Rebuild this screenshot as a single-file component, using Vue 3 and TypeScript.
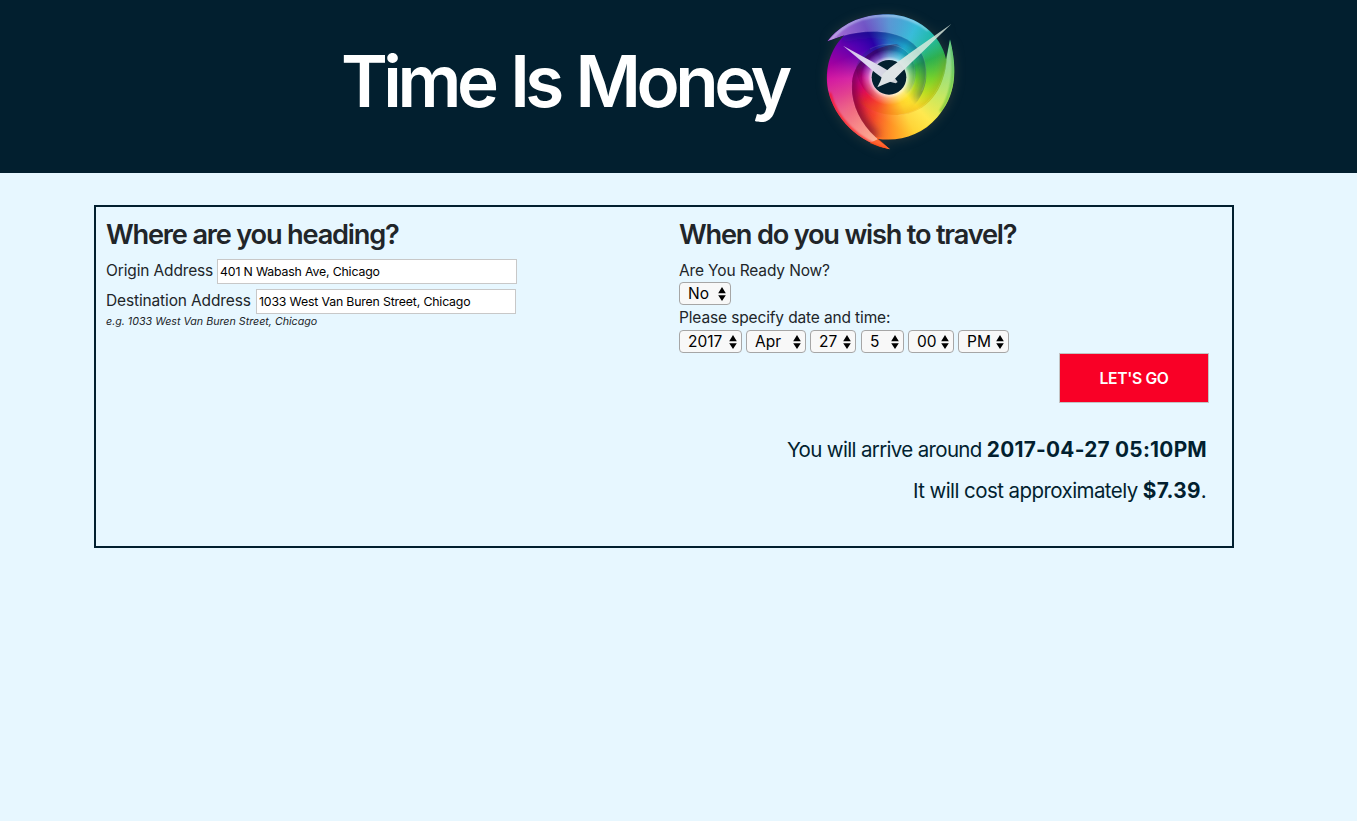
<script setup lang="ts">
import { ref } from 'vue'

interface Picker {
  name: string
  options: string[]
}

const origin = ref('401 N Wabash Ave, Chicago')
const destination = ref('1033 West Van Buren Street, Chicago')

const pickers: Picker[] = [
  { name: 'year', options: ['2017'] },
  { name: 'month', options: ['Apr'] },
  { name: 'day', options: ['27'] },
  { name: 'hour', options: ['5'] },
  { name: 'minute', options: ['00'] },
  { name: 'period', options: ['PM'] },
]
</script>

<template>
  <header class="banner">
    <h1 class="title">Time Is Money</h1>
    <div class="logo">
      <div class="wheel"></div>
      <svg class="blades" viewBox="0 0 480 516" aria-hidden="true">
        <defs>
          <clipPath id="outline">
            <path d="M52 124C92 74 150 43 235 43C322 45 394 105 408 178L420 118C444 215 437 288 382 352C335 407 268 426 201 416L240 448C145 427 74 358 54 270C43 206 61 147 103 106Z" />
          </clipPath>
          <clipPath id="underTop">
            <path d="M97 108C198 79 307 96 340 171C357 215 352 270 315 313L240 400L60 300Z" />
          </clipPath>
          <clipPath id="underRight">
            <path d="M411 168C405 270 352 340 265 345C218 346 172 330 143 302L140 150L300 60Z" />
          </clipPath>
          <clipPath id="underLeft">
            <path d="M197 412C148 367 120 305 126 247C133 177 195 138 261 132L380 200L340 420Z" />
          </clipPath>
          <clipPath id="underInner">
            <path d="M138 200C160 135 230 118 280 148C326 178 325 240 300 272C265 310 225 310 190 292C160 275 140 240 138 200Z" />
          </clipPath>
          <linearGradient id="topGloss" gradientUnits="userSpaceOnUse" x1="80" y1="100" x2="350" y2="150">
            <stop offset="0" stop-color="#fff" stop-opacity=".42" />
            <stop offset=".45" stop-color="#fff" stop-opacity=".28" />
            <stop offset="1" stop-color="#fff" stop-opacity=".02" />
          </linearGradient>
          <linearGradient id="rightGloss" gradientUnits="userSpaceOnUse" x1="420" y1="130" x2="270" y2="390">
            <stop offset="0" stop-color="#fff" stop-opacity=".5" />
            <stop offset=".5" stop-color="#fff" stop-opacity=".3" />
            <stop offset="1" stop-color="#fff" stop-opacity="0" />
          </linearGradient>
          <linearGradient id="leftGloss" gradientUnits="userSpaceOnUse" x1="190" y1="420" x2="90" y2="180">
            <stop offset="0" stop-color="#fff" stop-opacity=".5" />
            <stop offset=".45" stop-color="#fff" stop-opacity=".34" />
            <stop offset="1" stop-color="#fff" stop-opacity="0" />
          </linearGradient>
          <radialGradient id="hub">
            <stop offset=".64" stop-color="#fff" stop-opacity=".75" />
            <stop offset=".76" stop-color="#fff" stop-opacity=".35" />
            <stop offset="1" stop-color="#fff" stop-opacity="0" />
          </radialGradient>
          <linearGradient id="longHand" x1="1" y1="0" x2="0" y2="1">
            <stop offset="0" stop-color="#ddeadf" stop-opacity=".8" />
            <stop offset=".45" stop-color="#d8eee0" stop-opacity=".85" />
            <stop offset=".72" stop-color="#e0e5e6" />
            <stop offset="1" stop-color="#dde2e4" />
          </linearGradient>
          <linearGradient id="shortHand">
            <stop offset="0" stop-color="#d2b8e8" />
            <stop offset=".5" stop-color="#e0dcf0" />
            <stop offset="1" stop-color="#cbd0d3" />
          </linearGradient>
          <filter id="soft" x="-30%" y="-30%" width="160%" height="160%">
            <feGaussianBlur stdDeviation="12" />
          </filter>
          <filter id="fine" x="-30%" y="-30%" width="160%" height="160%">
            <feGaussianBlur stdDeviation="3" />
          </filter>
        </defs>
        <g clip-path="url(#outline)">
          <path d="M52 124C92 74 150 43 235 43C350 45 420 150 400 230C382 290 350 310 315 313C352 270 357 220 340 171C307 96 198 79 97 108Z" fill="url(#topGloss)" />
          <path d="M420 118C446 215 437 288 382 352C320 417 240 425 200 380C175 360 153 330 143 302C172 330 218 346 265 345C352 340 405 270 411 168Z" fill="url(#rightGloss)" />
          <path d="M240 448C145 427 74 358 54 270C43 205 68 159 117 147C166 133 220 126 261 132C195 138 133 177 126 247C120 305 148 367 197 412Z" fill="url(#leftGloss)" />
          <g clip-path="url(#underTop)">
            <path d="M97 108C198 79 307 96 340 171C357 215 352 260 325 300" fill="none" stroke="#00206c" stroke-opacity=".45" stroke-width="26" filter="url(#soft)" />
          </g>
          <g clip-path="url(#underRight)">
            <path d="M411 168C405 270 352 340 265 345C218 346 172 330 143 302" fill="none" stroke="#d86a00" stroke-opacity=".3" stroke-width="20" filter="url(#soft)" />
          </g>
          <g clip-path="url(#underLeft)">
            <path d="M197 412C148 367 120 305 126 247C133 177 195 138 261 132" fill="none" stroke="#48002f" stroke-opacity=".65" stroke-width="28" filter="url(#soft)" />
          </g>
          <g clip-path="url(#underInner)">
            <path d="M138 200C160 135 230 118 280 148C326 178 325 240 300 272" fill="none" stroke="#003070" stroke-opacity=".38" stroke-width="20" filter="url(#soft)" />
            <path d="M138 200C140 240 160 275 190 292" fill="none" stroke="#600020" stroke-opacity=".35" stroke-width="20" filter="url(#soft)" />
          </g>
          <g fill="none" stroke="#fff" stroke-opacity=".16" stroke-width="2">
            <path d="M97 108C198 79 307 96 340 171C352 205 350 240 335 273" />
            <path d="M180 147C230 121 280 135 302 169C320 200 319 238 300 272" />
            <path d="M126 247C120 305 148 367 197 412" />
            <path d="M411 168C400 270 348 337 265 345" />
          </g>
          <path d="M61 122C104 69 157 46 235 46C284 48 323 65 355 91" fill="none" stroke="#d8edff" stroke-opacity=".65" stroke-width="5" filter="url(#fine)" />
          <path d="M230 446C145 424 78 354 59 278" fill="none" stroke="#ff0008" stroke-opacity=".8" stroke-width="6" filter="url(#fine)" />
          <path d="M420 123C438 207 430 278 391 335" fill="none" stroke="#1ca817" stroke-opacity=".65" stroke-width="5" filter="url(#fine)" />
        </g>
        <path d="M210 415L199 411L240 448Q207 442 179 429Z" fill="#ff4d13" fill-opacity=".75" />
        <circle cx="237" cy="232" r="83" fill="url(#hub)" />
        <circle cx="237" cy="232" r="52" fill="#03202f" />
        <path d="M99 137L211 198L240 215L263 246L257 250L245 247L222 238L197 219Z" fill="url(#shortHand)" />
        <path d="M423 73L304 166L255 207L208 247L216 256L241 228Z" fill="#000" fill-opacity=".15" filter="url(#fine)" />
        <path d="M424 72L274 217L249 242L219 254L202 262L211 244L218 223L240 203L304 156Z" fill="url(#longHand)" />
      </svg>
    </div>
  </header>

  <main class="panel">
    <section class="where">
      <h2 class="heading">Where are you heading?</h2>
      <div class="field">
        <label class="origin-label" for="origin">Origin Address</label>
        <input id="origin" v-model="origin" class="address" type="text" />
      </div>
      <div class="field destination-field">
        <label class="destination-label" for="destination">Destination Address</label>
        <input id="destination" v-model="destination" class="address destination" type="text" />
      </div>
      <p class="hint">e.g. 1033 West Van Buren Street, Chicago</p>
    </section>

    <section class="when">
      <h2 class="heading">When do you wish to travel?</h2>
      <p class="label">Are You Ready Now?</p>
      <div class="picker ready">
        <select aria-label="ready"><option>No</option></select>
        <svg class="arrows" viewBox="0 0 8 14"><path d="M4 0L7.8 6.2H.2zM4 14L.2 8.2H7.8z" /></svg>
      </div>
      <p class="label specify-label">Please specify date and time:</p>
      <div class="date-row">
        <div v-for="p in pickers" :key="p.name" class="picker" :class="p.name">
          <select :aria-label="p.name"><option v-for="o in p.options" :key="o">{{ o }}</option></select>
          <svg class="arrows" viewBox="0 0 8 14"><path d="M4 0L7.8 6.2H.2zM4 14L.2 8.2H7.8z" /></svg>
        </div>
      </div>
      <button class="go" type="button"><span>LET'S GO</span></button>
      <p class="result arrive"><span>You will arrive around </span><b>2017-04-27 05:10PM</b></p>
      <p class="result cost"><span>It will cost approximately </span><b>$7.39</b>.</p>
    </section>
  </main>
</template>

<style>
html,
body {
  margin: 0;
  min-height: 100%;
  background: #e7f7ff;
}
</style>

<style scoped>
* {
  box-sizing: border-box;
}

.banner,
.panel {
  font-family: Inter, "Liberation Sans", sans-serif;
  color: #212529;
}

.banner {
  display: flex;
  height: 173px;
  padding-left: 341px;
  background: #021f2f;
}

.title {
  flex: none;
  width: 469px;
  margin: 0;
  padding-top: 38px;
  color: #fff;
  font-size: 71px;
  font-weight: 600;
  line-height: 86px;
  letter-spacing: -4.5px;
  word-spacing: 2.4px;
  white-space: nowrap;
}

.logo {
  position: relative;
  width: 160px;
  height: 172px;
  filter: drop-shadow(0 1px 6px rgba(190, 150, 100, 0.2));
}

.wheel {
  position: absolute;
  inset: 0;
  background: conic-gradient(from 0deg at 79px 77px,
    #2877c7 0deg, #20b4d5 28deg, #20b9a7 47deg, #29af4c 67deg, #72d228 92deg,
    #b8e01e 113deg, #ffe52f 137deg, #ffd32e 155deg, #ff9425 177deg, #f8492b 201deg,
    #e91b3c 226deg, #d9056e 249deg, #ce0098 268deg, #8b00a5 290deg, #5400b3 312deg,
    #2b00a9 335deg, #2877c7 360deg);
  clip-path: path("M17.3 41.3C30.7 24.7 50 14.3 78.3 14.3C107.3 15 131.3 35 136 59.3L140 39.3C148 71.7 145.7 96 127.3 117.3C111.7 135.7 89.3 142 67 138.7L80 149.3C48.3 142.3 24.7 119.3 18 90C14.3 68.7 20.3 49 34.3 35.3Z");
}

.blades {
  position: absolute;
  inset: 0;
  width: 160px;
  height: 172px;
}

.panel {
  display: flex;
  width: 1140px;
  height: 343px;
  margin: 32px 0 0 94px;
  border: 2px solid #021f2f;
  font-size: 15.5px;
  letter-spacing: -0.14px;
}

.where {
  width: 573px;
  padding: 10px;
}

.when {
  display: flex;
  flex-direction: column;
  width: 563px;
  padding: 10px;
}

.heading {
  margin: 0 0 7px;
  padding-top: 1px;
  font-size: 27.2px;
  font-weight: 580;
  line-height: 34px;
  letter-spacing: -1.2px;
  white-space: nowrap;
}

.field {
  display: flex;
  height: 25px;
  align-items: center;
}

.destination-field {
  margin-top: 5px;
}

.field label {
  flex: none;
  height: 25px;
  line-height: 23px;
  white-space: nowrap;
}

.origin-label {
  width: 111px;
}

.destination-label {
  width: 150px;
}

.address {
  width: 300px;
  height: 25px;
  padding: 0 2px;
  border: 1px solid #c8c8c8;
  border-radius: 0;
  background: #fff;
  color: #000;
  font: 12.3px Inter, sans-serif;
  letter-spacing: -0.16px;
}

.destination {
  width: 260px;
}

.hint {
  margin: 0;
  font-size: 10.7px;
  font-style: italic;
  line-height: 15px;
  letter-spacing: 0;
}

.label {
  margin: 0;
  line-height: 23px;
}

.specify-label {
  line-height: 25px;
}

.picker {
  position: relative;
  height: 23px;
}

.picker select {
  width: 100%;
  height: 23px;
  padding: 0 0 0 8px;
  appearance: none;
  border: 1px solid #a6a6a6;
  border-radius: 4px;
  background: #f8f8f8;
  color: #000;
  font: 15.5px Inter, sans-serif;
}

.arrows {
  position: absolute;
  top: 5px;
  right: 5px;
  width: 8px;
  height: 14px;
}

.ready {
  width: 52px;
}

.date-row {
  display: flex;
}

.year {
  width: 63px;
  margin-right: 4px;
}

.month {
  width: 60px;
  margin-right: 4px;
}

.day {
  width: 46px;
  margin-right: 5px;
}

.hour {
  width: 43px;
  margin-right: 4px;
}

.minute {
  width: 46px;
  margin-right: 4px;
}

.period {
  width: 51px;
}

.go {
  align-self: flex-end;
  width: 150px;
  height: 50px;
  margin-right: 13px;
  padding: 0;
  border: 1px solid #c3c3c3;
  background: #f90026;
  color: #fff;
  font: 600 15.7px Inter, sans-serif;
  letter-spacing: -0.35px;
}

.result {
  align-self: flex-end;
  margin: 0;
  padding-right: 15px;
  color: #021f2f;
  font-size: 20.5px;
  line-height: 31px;
  letter-spacing: -0.66px;
  white-space: pre;
}

.result b {
  font-weight: 700;
  font-size: 20.8px;
  letter-spacing: 0.26px;
}

.arrive {
  margin-top: 31px;
}

.cost {
  margin-top: 10px;
  padding-right: 16px;
  letter-spacing: -0.57px;
}
</style>
